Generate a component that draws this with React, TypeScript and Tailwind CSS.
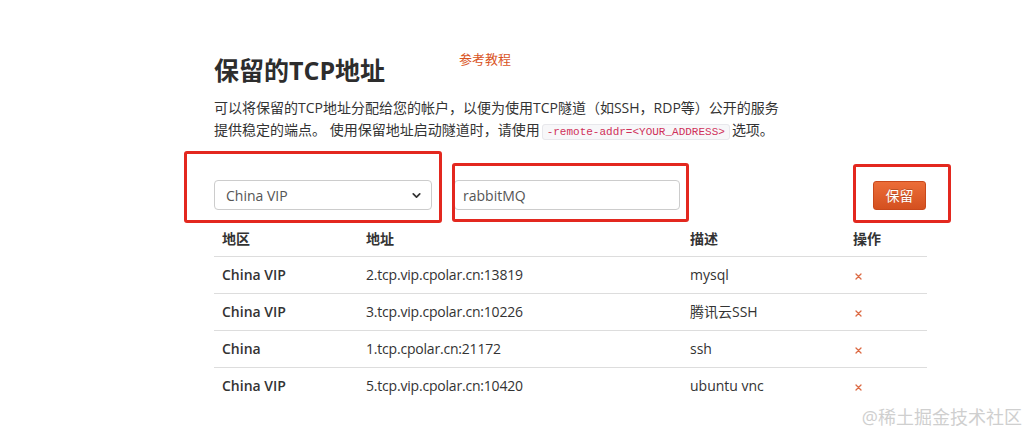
import { ChevronDown } from "lucide-react";

const rows = [
  { region: "China VIP", addr: "2.tcp.vip.cpolar.cn:13819", desc: "mysql" },
  { region: "China VIP", addr: "3.tcp.vip.cpolar.cn:10226", desc: "腾讯云SSH" },
  { region: "China", addr: "1.tcp.cpolar.cn:21172", desc: "ssh" },
  { region: "China VIP", addr: "5.tcp.vip.cpolar.cn:10420", desc: "ubuntu vnc" },
];

function DeleteMark() {
  return (
    <svg width="7" height="7" viewBox="0 0 7 7" className="inline-block">
      <path d="M1 1L6 6M6 1L1 6" stroke="#dc6a44" strokeWidth="1.3" strokeLinecap="round" />
    </svg>
  );
}

export default function App() {
  return (
    <div
      className="relative h-[434px] w-[1028px] overflow-hidden bg-white text-[#333]"
      style={{ fontFamily: '"Open Sans", "Noto Sans CJK SC", sans-serif' }}
    >
      <div className="ml-[214px] w-[713px] pt-[50px]">
        <div className="flex items-start">
          <h1 className="mt-[6px] w-[245px] text-[25px] font-bold leading-[29px] text-[#2d2d2d]">
            保留的TCP地址
          </h1>
          <a className="text-[13px] leading-[18px] text-[#d9531e]">参考教程</a>
        </div>

        <p className="mt-[12px] w-[580px] text-[14px] leading-[22px] text-[#333]">
          可以将保留的TCP地址分配给您的帐户，以便为使用TCP隧道（如SSH，RDP等）公开的服务
          <br />
          提供稳定的端点。 使用保留地址启动隧道时，请使用
          <code className="mx-[2px] rounded-[3px] border border-[#e8e8ec] bg-[#f7f7f9] px-[4px] py-[1px] text-[11px] text-[#d0305a]" style={{ fontFamily: '"Liberation Mono", monospace' }}>
            -remote-addr=&lt;YOUR_ADDRESS&gt;
          </code>
          选项。
        </p>

        <div className="mt-[37px] flex items-center">
          <div className="flex h-[30px] w-[218px] items-center justify-between rounded-[4px] border border-[#ccc] bg-white pl-[11px] pr-[8px] text-[14px] text-[#555]">
            <span>China VIP</span>
            <ChevronDown size={13} strokeWidth={3.2} className="text-[#333]" />
          </div>
          <div className="ml-[22px] flex h-[30px] w-[226px] items-center rounded-[4px] border border-[#ccc] bg-white pl-[8px] text-[14px] text-[#555]">
            rabbitMQ
          </div>
          <button className="ml-auto mr-[1px] h-[29px] w-[53px] rounded-[3px] border border-[#c9481b] bg-gradient-to-b from-[#ec6d38] to-[#d4501f] text-[14px] text-white [text-shadow:0_-1px_0_rgba(0,0,0,0.2)]">
            保留
          </button>
        </div>

        <table className="mt-[11px] w-[713px] border-collapse text-left text-[14px]">
          <thead>
            <tr className="border-b border-[#ddd]">
              <th className="w-[144px] px-[8px] py-[8px] font-bold leading-[19px]">地区</th>
              <th className="w-[324px] px-[8px] py-[8px] font-bold leading-[19px]">地址</th>
              <th className="w-[163px] px-[8px] py-[8px] font-bold leading-[19px]">描述</th>
              <th className="px-[8px] py-[8px] font-bold leading-[19px]">操作</th>
            </tr>
          </thead>
          <tbody>
            {rows.map((r, i) => (
              <tr key={i} className={i < rows.length - 1 ? "border-b border-[#ddd]" : ""}>
                <td className="px-[8px] py-[8px] font-semibold leading-[20px]">{r.region}</td>
                <td className="px-[8px] py-[8px] leading-[20px] tracking-[-0.2px]">{r.addr}</td>
                <td className="px-[8px] py-[8px] leading-[20px]">{r.desc}</td>
                <td className="px-[8px] py-[8px] pl-[10px] leading-[20px]">
                  <DeleteMark />
                </td>
              </tr>
            ))}
          </tbody>
        </table>
      </div>

      {/* annotation boxes */}
      <div className="absolute left-[184px] top-[151px] h-[72px] w-[258px] rounded-[3px] border-[3px] border-[#e3281f]" />
      <div className="absolute left-[452px] top-[163px] h-[59px] w-[237px] rounded-[3px] border-[3px] border-[#e3281f]" />
      <div className="absolute left-[853px] top-[164px] h-[59px] w-[98px] rounded-[3px] border-[3px] border-[#e3281f]" />

      <div className="absolute right-[6px] top-[405px] text-[18px] leading-[24px] text-[#cfcfcf]">
        @稀土掘金技术社区
      </div>
    </div>
  );
}
